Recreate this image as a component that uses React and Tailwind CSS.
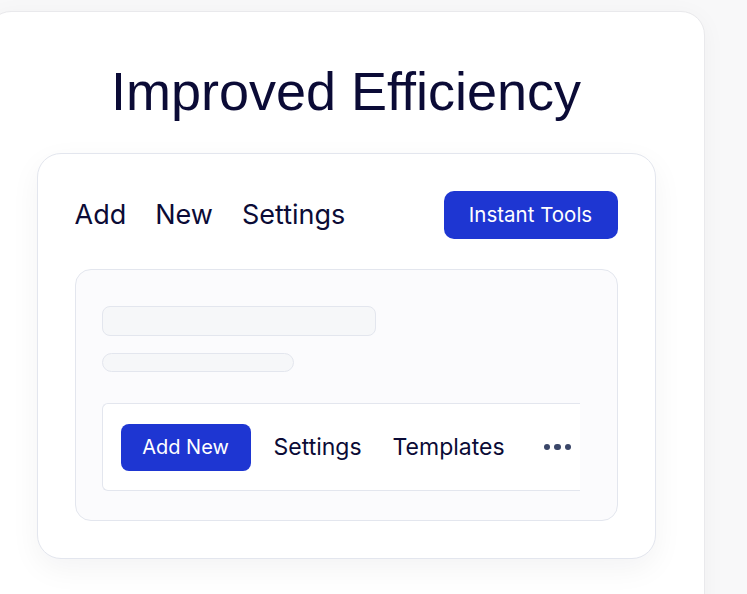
import React from 'react';

const inter = { fontFamily: 'Inter, "Noto Sans", sans-serif' };

const Dots = () => (
  <div className="flex items-center gap-[4px]">
    <span className="h-[6.5px] w-[6.5px] rounded-full bg-[#3b4769]" />
    <span className="h-[6.5px] w-[6.5px] rounded-full bg-[#3b4769]" />
    <span className="h-[6.5px] w-[6.5px] rounded-full bg-[#3b4769]" />
  </div>
);

const App = () => {
  return (
    <div className="min-h-screen overflow-hidden bg-[#f8f8f9] pt-[11px]">
      <div className="ml-[-13px] h-[620px] w-[718px] rounded-t-[24px] border border-[#e9e9ec] bg-white pt-[52px] shadow-[0_4px_24px_rgba(15,23,42,0.04)]">
        {/* Heading */}
        <h1
          className="text-center text-[54px] leading-none text-[#0b0b36]"
          style={{ fontFamily: '"Liberation Sans", Arial, sans-serif' }}
        >
          Improved Efficiency
        </h1>

        {/* Preview card */}
        <div
          className="mx-auto mt-[35px] w-[619px] rounded-[24px] border border-[#e3e6ee] bg-white px-[37px] pb-[37px] pt-[37px] shadow-[0_10px_30px_rgba(15,23,42,0.05)]"
          style={inter}
        >
          <div className="flex h-[48px] items-center justify-between">
            <div className="flex items-center gap-[29px] text-[27px] text-[#0b0b36]">
              <span>Add</span>
              <span>New</span>
              <span>Settings</span>
            </div>
            <button className="flex h-[48px] w-[174px] items-center justify-center rounded-[10px] bg-[#1e36d2] text-[20.5px] text-white">
              Instant Tools
            </button>
          </div>

          <div className="mt-[30px] rounded-[16px] border border-[#e3e6ee] bg-[#fbfbfd] pb-[29px] pl-[26px] pt-[36px]">
            <div className="h-[30px] w-[274px] rounded-[8px] border border-[#e3e6ee] bg-[#f6f7f9]" />
            <div className="mt-[17px] h-[19px] w-[192px] rounded-full border border-[#e3e6ee] bg-[#f6f7f9]" />

            {/* Toolbar */}
            <div className="mt-[31px] flex h-[88px] w-[478px] items-center overflow-hidden rounded-l-[6px] border-y border-l border-[#e3e6ee] bg-white pl-[18px]">
              <button className="flex h-[47px] w-[130px] shrink-0 items-center justify-center rounded-[8px] bg-[#1e36d2] text-[20px] text-white">
                Add New
              </button>
              <span className="ml-[23px] shrink-0 text-[23px] text-[#0b0b36]">Settings</span>
              <span className="ml-[31px] shrink-0 text-[23px] text-[#0b0b36]">Templates</span>
              <div className="ml-[39px] shrink-0">
                <Dots />
              </div>
            </div>
          </div>
        </div>
      </div>
    </div>
  );
};

export default App;
